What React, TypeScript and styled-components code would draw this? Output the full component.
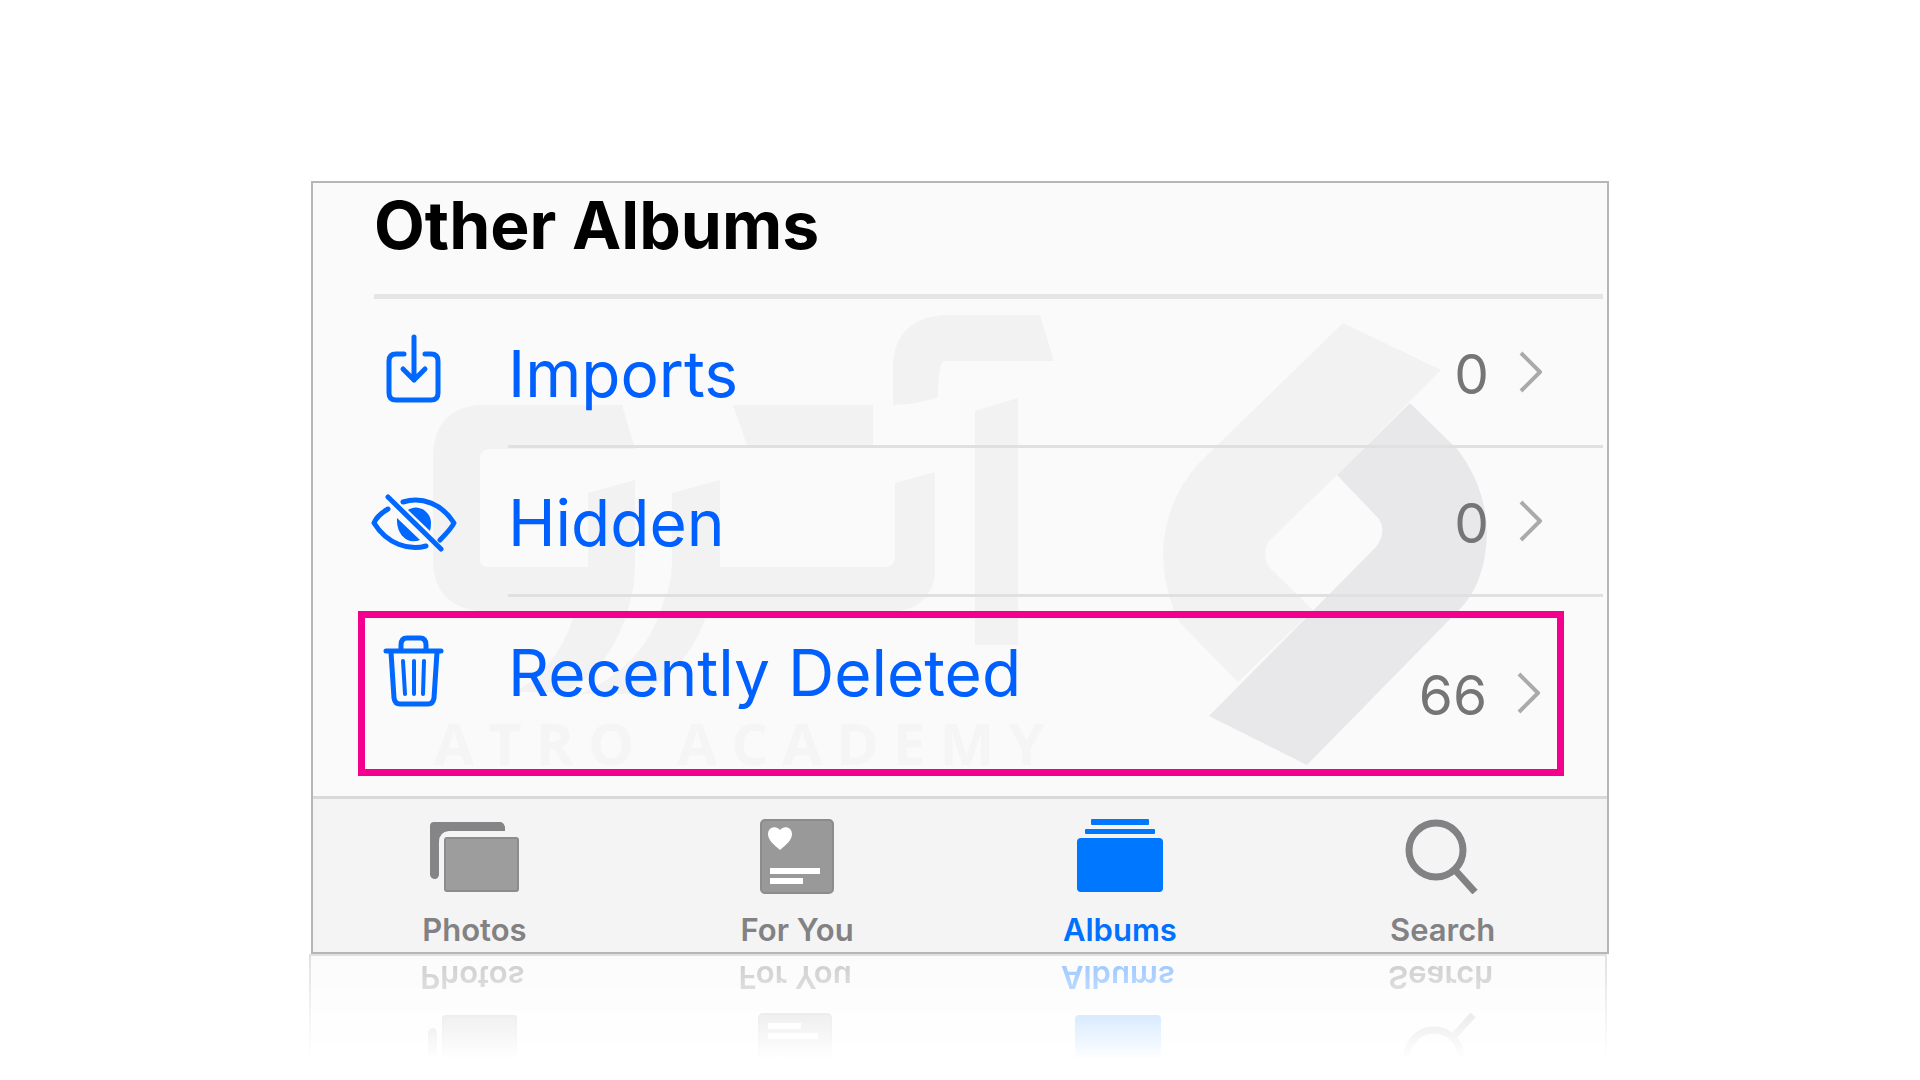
import React from "react";
import styled, { createGlobalStyle } from "styled-components";

const GlobalStyle = createGlobalStyle`
  *, *::before, *::after { box-sizing: border-box; }
  body {
    margin: 0;
    background: #ffffff;
    font-family: Inter, Roboto, "Liberation Sans", sans-serif;
  }
  button {
    appearance: none;
    border: 0;
    margin: 0;
    padding: 0;
    background: none;
    font: inherit;
    color: inherit;
    text-align: left;
    cursor: pointer;
  }
  svg { display: block; flex: none; }
`;

const Page = styled.div`
  display: flex;
  flex-direction: column;
  align-items: center;
  padding: 181px 16px 20px;
`;

const Card = styled.main`
  position: relative;
  isolation: isolate;
  width: 100%;
  max-width: 1298px;
  border: 2px solid #b6b5b7;
  background: #fafafa;
`;

const Watermark = styled.div`
  position: absolute;
  inset: 0;
  z-index: -1;
  overflow: hidden;
  pointer-events: none;
`;

const Header = styled.header`
  margin: 0 4px 0 61px;
  padding-bottom: 27px;
  border-bottom: 5px solid #e5e5e5;
`;

const Title = styled.h1`
  margin: 0;
  font-size: 66px;
  line-height: 84px;
  font-weight: 700;
  color: #000000;
`;

const List = styled.ul`
  list-style: none;
  margin: 0;
  padding: 0;
`;

const Item = styled.li``;

const Row = styled.button`
  display: flex;
  width: 100%;
  padding: 0 4px 0 58px;
`;

const Lead = styled.span`
  display: flex;
  align-items: center;
  width: 137px;
  flex: none;
`;

const RowBody = styled.span`
  display: flex;
  align-items: center;
  flex: 1;
  height: 149px;
  padding: 4px 60px 0 0;
  border-bottom: 3px solid #e0e0e1;
`;

const Label = styled.span`
  flex: 1;
  font-size: 64px;
  line-height: 82px;
  color: #0060ff;
`;

const Count = styled.span`
  margin-right: 30px;
  font-size: 55px;
  line-height: 66px;
  color: #757575;
`;

const HighlightItem = styled.li`
  margin: 14px 43px 20px 45px;
`;

const HighlightRow = styled.button`
  display: flex;
  align-items: center;
  width: 100%;
  height: 165px;
  padding: 2px 16px 0 6px;
  border: 7px solid #f4008f;
`;

const HighlightLabel = styled.span`
  display: flex;
  align-self: flex-start;
  flex: 1;
  padding-top: 12px;
`;

const TabBar = styled.nav`
  display: grid;
  grid-template-columns: repeat(4, 1fr);
  height: 156px;
  padding-right: 3px;
  border-top: 3px solid #d9d9da;
  background: #f4f4f4;
`;

const tabColor = (active?: boolean) => (active ? "#0070ff" : "#828183");

const Tab = styled.button<{ $active?: boolean }>`
  display: flex;
  flex-direction: column;
  align-items: center;
  gap: 18px;
  padding-top: 19px;
  color: ${(p) => tabColor(p.$active)};
`;

const TabLabel = styled.span`
  font-size: 31px;
  line-height: 36px;
  font-weight: 600;
`;

const Reflection = styled.div`
  width: 100%;
  max-width: 1302px;
  height: 106px;
  padding-right: 4px;
  overflow: hidden;
  mask-image: linear-gradient(rgba(0, 0, 0, 0.42), rgba(0, 0, 0, 0.14) 60%, transparent);
`;

const MirroredBar = styled.div`
  display: grid;
  grid-template-columns: repeat(4, 1fr);
  height: 156px;
  padding-right: 3px;
  border: solid #b6b5b7;
  border-width: 0 2px 2px;
  background: #f6f6f6;
  transform: scaleY(-1);
`;

const MirroredTab = styled.span<{ $active?: boolean }>`
  display: flex;
  flex-direction: column;
  align-items: center;
  gap: 18px;
  padding-top: 21px;
  color: ${(p) => tabColor(p.$active)};
`;

const ImportIcon = () => (
  <svg width="90" height="82" viewBox="0 0 90 82" fill="none" stroke="#0068ff" strokeWidth="5" strokeLinecap="round" strokeLinejoin="round" aria-hidden="true">
    <path d="M33 21H25Q18 21 18 28V60Q18 67 25 67H60Q67 67 67 60V28Q67 21 60 21H54" />
    <path d="M43 4V47M32 36L43 47L54 36" />
  </svg>
);

const HiddenIcon = () => (
  <svg width="90" height="82" viewBox="0 0 90 82" aria-hidden="true">
    <g transform="translate(0 1)">
      <g fill="none" stroke="#0068ff" strokeWidth="5" strokeLinecap="round" strokeLinejoin="round">
        <path d="M32 19C51 13 71 21 83 40C80 46 75 51 69 57" />
        <path d="M17 26C10 30 5 35 3 40C16 61 38 68 55 63" />
        <path d="M17 14L70 66" />
      </g>
      <path fill="#0068ff" d="M37 27C46 20 60 28 60 40Q60 44 59 48Z" />
      <path fill="#0068ff" d="M26 35L49 57C38 62 25 53 26 35Z" />
    </g>
  </svg>
);

const TrashIcon = () => (
  <svg width="90" height="82" viewBox="0 0 90 82" fill="none" stroke="#0068ff" strokeWidth="5" strokeLinecap="round" strokeLinejoin="round" aria-hidden="true">
    <path d="M15 19H70" />
    <path d="M30 18V13Q30 6 36 6H49Q55 6 55 13V18" />
    <path d="M20 20L23 66Q24 72 29 72H57Q62 72 63 66L66 20" />
    <path strokeWidth="4" d="M32 29L34 62M43 29V62M53 29L52 62" />
  </svg>
);

const Chevron = () => (
  <svg width="24" height="46" viewBox="0 0 24 46" fill="none" stroke="#aaaaaa" strokeWidth="4" strokeLinejoin="round" aria-hidden="true">
    <path d="M2 2L21 21L2 40" />
  </svg>
);

const PhotosIcon = () => (
  <svg width="90" height="76" viewBox="0 0 90 76" aria-hidden="true">
    <path fill="#858486" d="M1 8Q1 4 5 4H72Q75 5 76 9V13H20Q10 14 10 24V57Q9 61 6 61Q2 61 1 57Z" />
    <rect x="16" y="20" width="73" height="53" rx="2" fill="#9e9d9e" stroke="#8c8b8d" strokeWidth="2" />
  </svg>
);

const ForYouIcon = () => (
  <svg width="90" height="76" viewBox="0 0 90 76" aria-hidden="true">
    <rect x="9" y="2" width="72" height="73" rx="4" fill="#9a999a" stroke="#8c8b8d" strokeWidth="2" />
    <path fill="#ffffff" d="M28 32C22 27 16 22 16 16C16 9 24 7 28 12C32 7 40 9 40 16C40 22 34 27 28 32Z" />
    <path stroke="#ffffff" strokeWidth="6" d="M18 53H68M18 63H51" />
  </svg>
);

const AlbumsIcon = () => (
  <svg width="90" height="76" viewBox="0 0 90 76" fill="#0077ff" aria-hidden="true">
    <rect x="16" y="1" width="58" height="6" rx="1" />
    <rect x="10" y="11" width="70" height="5" rx="1" />
    <rect x="2" y="20" width="86" height="54" rx="4" />
  </svg>
);

const SearchIcon = () => (
  <svg width="90" height="76" viewBox="0 0 90 76" fill="none" stroke="#828183" aria-hidden="true">
    <circle cx="38" cy="32" r="27" strokeWidth="7" />
    <path d="M57 52L77 74" strokeWidth="7" />
  </svg>
);

const BrandMark = () => (
  <svg width="100%" height="100%" viewBox="313 183 1294 769" aria-hidden="true">
    <g fill="#f2f2f3">
      <path d="M480 405H622L635 449H490Q480 449 480 459V560Q480 567 488 567H588V493L635 480V565C635 590 628 615 618 636Q600 674 565 692H515C545 676 566 645 575 612H485Q433 608 433 560V455Q435 408 480 405Z" />
      <path d="M672 493L720 480V567H886Q895 566 895 556V483L935 472V575Q930 610 890 612H707C697 650 665 688 633 694H580C620 676 650 650 664 600Q672 585 672 560Z" />
      <path d="M733 405H873V448H748Z" />
      <path d="M975 411L1018 398V645H975Z" />
      <path d="M893 405V362Q897 318 945 315H1040L1054 361H943Q938 368 938 397Q920 404 893 405Z" />
      <path d="M1343 323L1441 370L1337 475L1269 541Q1262 552 1268 566L1313 610L1238 682L1180 623Q1163 590 1163 553Q1165 500 1200 462Z" />
    </g>
    <path fill="#e8e8ea" d="M1410 403L1458 450Q1487 489 1487 535Q1485 585 1458 611L1307 765L1209 716L1376 547Q1387 532 1379 519L1337 475Z" />
    <text x="434" y="765" fill="#f5f5f5" fontFamily="Open Sans, sans-serif" fontSize="58" fontWeight="700" letterSpacing="14">
      ATRO ACADEMY
    </text>
  </svg>
);

const albums = [
  { name: "Imports", count: 0, Icon: ImportIcon },
  { name: "Hidden", count: 0, Icon: HiddenIcon },
];

const tabs = [
  { name: "Photos", Icon: PhotosIcon },
  { name: "For You", Icon: ForYouIcon },
  { name: "Albums", Icon: AlbumsIcon, active: true },
  { name: "Search", Icon: SearchIcon },
];

export default function App() {
  return (
    <>
      <GlobalStyle />
      <Page>
        <Card>
          <Watermark>
            <BrandMark />
          </Watermark>
          <Header>
            <Title>Other Albums</Title>
          </Header>
          <List>
            {albums.map(({ name, count, Icon }) => (
              <Item key={name}>
                <Row type="button">
                  <Lead>
                    <Icon />
                  </Lead>
                  <RowBody>
                    <Label>{name}</Label>
                    <Count>{count}</Count>
                    <Chevron />
                  </RowBody>
                </Row>
              </Item>
            ))}
            <HighlightItem>
              <HighlightRow type="button">
                <HighlightLabel>
                  <Lead>
                    <TrashIcon />
                  </Lead>
                  <Label>Recently Deleted</Label>
                </HighlightLabel>
                <Count>66</Count>
                <Chevron />
              </HighlightRow>
            </HighlightItem>
          </List>
          <TabBar aria-label="Library sections">
            {tabs.map(({ name, Icon, active }) => (
              <Tab key={name} type="button" $active={active} aria-current={active ? "page" : undefined}>
                <Icon />
                <TabLabel>{name}</TabLabel>
              </Tab>
            ))}
          </TabBar>
        </Card>
        <Reflection aria-hidden="true">
          <MirroredBar>
            {tabs.map(({ name, Icon, active }) => (
              <MirroredTab key={name} $active={active}>
                <Icon />
                <TabLabel>{name}</TabLabel>
              </MirroredTab>
            ))}
          </MirroredBar>
        </Reflection>
      </Page>
    </>
  );
}
